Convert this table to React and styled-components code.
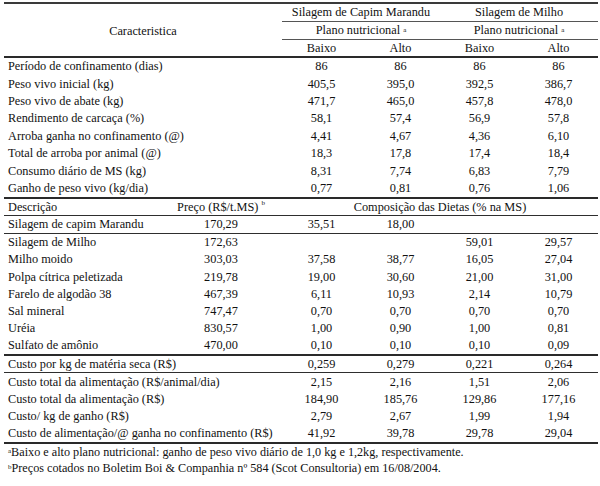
import React from 'react'
import styled, {createGlobalStyle} from 'styled-components'

const GlobalStyle = createGlobalStyle`
    html, body {
        margin: 0;
        padding: 0;
        background: #fff;
    }
    body {
        font-family: "Liberation Serif", "Times New Roman", serif;
        color: #111;
    }
`

const Page = styled.div`
    width: 600px;
    height: 486px;
    padding: 2px 2px 0 4px;
    box-sizing: border-box;
    font-size: 12.3px;
`

const Sup = styled.sup`
    font-size: 7px;
    vertical-align: top;
    position: relative;
    top: -1px;
    margin-left: ${p => p.$gap ? '3px' : '0'};
`

const Header = styled.div`
    display: grid;
    grid-template-columns: 278px 158px 158px;
    border-top: 2px solid #3a3a3a;
    border-bottom: 2px solid #2a2a2a;
`

const HeadTitle = styled.div`
    display: flex;
    align-items: center;
    justify-content: center;
    padding-top: 2px;
`

const Group = styled.div`
    display: grid;
    grid-template-rows: 18px 18px 16px;
    grid-template-columns: 1fr 1fr;

    >.wide {
        grid-column: 1 / 3;
        display: flex;
        align-items: center;
        justify-content: center;
        border-bottom: 1px solid #555;
    }

    >.sub {
        display: flex;
        align-items: center;
        justify-content: center;
    }
`

const Row = styled.div`
    display: grid;
    grid-template-columns: ${p => p.$cols};
    height: ${p => p.$h}px;
    align-items: center;
    border-bottom: ${p => p.$line ? `${p.$line}px solid #2e2e2e` : 'none'};

    >.label {
        padding-left: 4px;
        white-space: nowrap;
        grid-column: ${p => p.$span ? `span ${p.$span}` : 'auto'};
    }

    >.num {
        text-align: center;
        white-space: nowrap;
    }

    >.wide {
        grid-column: span 4;
        text-align: center;
    }
`

const TOP = '278px repeat(4, 79px)'
const BOTTOM = '156px 122px repeat(4, 79px)'

const charRows = [
    ['Período de confinamento (dias)', '86', '86', '86', '86'],
    ['Peso vivo inicial (kg)', '405,5', '395,0', '392,5', '386,7'],
    ['Peso vivo de abate (kg)', '471,7', '465,0', '457,8', '478,0'],
    ['Rendimento de carcaça (%)', '58,1', '57,4', '56,9', '57,8'],
    ['Arroba ganha no confinamento (@)', '4,41', '4,67', '4,36', '6,10'],
    ['Total de arroba por animal (@)', '18,3', '17,8', '17,4', '18,4'],
    ['Consumo diário de MS (kg)', '8,31', '7,74', '6,83', '7,79'],
    ['Ganho de peso vivo (kg/dia)', '0,77', '0,81', '0,76', '1,06'],
]

const dietRows = [
    ['Silagem de Milho', '172,63', '', '', '59,01', '29,57'],
    ['Milho moido', '303,03', '37,58', '38,77', '16,05', '27,04'],
    ['Polpa cítrica peletizada', '219,78', '19,00', '30,60', '21,00', '31,00'],
    ['Farelo de algodão 38', '467,39', '6,11', '10,93', '2,14', '10,79'],
    ['Sal mineral', '747,47', '0,70', '0,70', '0,70', '0,70'],
    ['Uréia', '830,57', '1,00', '0,90', '1,00', '0,81'],
    ['Sulfato de amônio', '470,00', '0,10', '0,10', '0,10', '0,09'],
]

const costRows = [
    ['Custo total da alimentação (R$/animal/dia)', '2,15', '2,16', '1,51', '2,06'],
    ['Custo total da alimentação (R$)', '184,90', '185,76', '129,86', '177,16'],
    ['Custo/ kg de ganho (R$)', '2,79', '2,67', '1,99', '1,94'],
    ['Custo de alimentação/@ ganha no confinamento (R$)', '41,92', '39,78', '29,78', '29,04'],
]

const Block = styled.div`
    border-bottom: ${p => p.$line}px solid #2a2a2a;
`

const Notes = styled.div`
    padding: 0 0 0 4px;
    font-size: 12.2px;
    line-height: 16px;
`

const DataRow = ({cells, cols, h, span, line}) => (
    <Row $cols={cols} $h={h} $span={span} $line={line}>
        <span className="label">{cells[0]}</span>
        {cells.slice(1).map((c, i) => <span className="num" key={i}>{c}</span>)}
    </Row>
)

const GroupHead = ({title}) => (
    <Group>
        <div className="wide">{title}</div>
        <div className="wide">Plano nutricional<Sup $gap>a</Sup></div>
        <div className="sub">Baixo</div>
        <div className="sub">Alto</div>
    </Group>
)

export default function App() {
    return (
        <Page>
            <GlobalStyle/>
            <Header>
                <HeadTitle>Caracteristica</HeadTitle>
                <GroupHead title="Silagem de Capim Marandu"/>
                <GroupHead title="Silagem de Milho"/>
            </Header>
            <Block $line={2}>
                {charRows.map(r => <DataRow key={r[0]} cells={r} cols={TOP} h={17.4}/>)}
            </Block>
            <Row $cols={BOTTOM} $h={16} $line={1.5}>
                <span className="label">Descrição</span>
                <span className="num">Preço (R$/t.MS)<Sup $gap>b</Sup></span>
                <span className="wide">Composição das Dietas (% na MS)</span>
            </Row>
            <DataRow cells={['Silagem de capim Marandu', '170,29', '35,51', '18,00', '', '']} cols={BOTTOM} h={17} line={1.5}/>
            <Block $line={2}>
                {dietRows.map(r => <DataRow key={r[0]} cells={r} cols={BOTTOM} h={17.2}/>)}
            </Block>
            <DataRow cells={['Custo por kg de matéria seca (R$)', '0,259', '0,279', '0,221', '0,264']} cols={BOTTOM} h={16} span={2} line={1.5}/>
            <Block $line={2}>
                {costRows.map(r => <DataRow key={r[0]} cells={r} cols={BOTTOM} h={17.2} span={2}/>)}
            </Block>
            <Notes>
                <div><Sup>a</Sup>Baixo e alto plano nutricional: ganho de peso vivo diário de 1,0 kg e 1,2kg, respectivamente.</div>
                <div><Sup>b</Sup>Preços cotados no Boletim Boi &amp; Companhia nº 584 (Scot Consultoria) em 16/08/2004.</div>
            </Notes>
        </Page>
    )
}
